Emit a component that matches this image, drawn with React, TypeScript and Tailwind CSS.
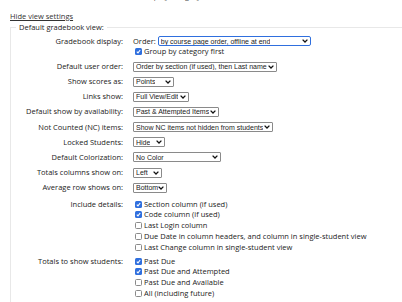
import React from "react";

const label = "font-['Open_Sans',sans-serif] text-[7.5px] leading-[11px] text-[#222]";
const sel = "font-['Liberation_Sans',Arial,sans-serif] text-[7px] text-[#222]";

function Chevron() {
  return (
    <svg width="6" height="4" viewBox="0 0 6 4" className="shrink-0">
      <path d="M0.6 0.6 L3 3 L5.4 0.6" fill="none" stroke="#111" strokeWidth="1.3" />
    </svg>
  );
}

function Select({ text, w, focus }: { text: string; w: string; focus?: boolean }) {
  return (
    <div
      className={`${w} ${sel} h-[10px] flex items-center justify-between bg-white pl-[2px] pr-[2px] ${
        focus ? "border-[1.5px] border-[#2f6fde] rounded-[2px]" : "border border-[#8a8a8a] rounded-[1px]"
      }`}
    >
      <span className="whitespace-nowrap overflow-hidden leading-none">{text}</span>
      <Chevron />
    </div>
  );
}

function Box({ on }: { on?: boolean }) {
  return on ? (
    <span className="w-[7px] h-[7px] rounded-[1.5px] bg-[#2f6fde] flex items-center justify-center shrink-0">
      <svg width="5" height="5" viewBox="0 0 5 5">
        <path d="M0.8 2.6 L2 3.8 L4.2 1" fill="none" stroke="white" strokeWidth="1.1" />
      </svg>
    </span>
  ) : (
    <span className="w-[7px] h-[7px] rounded-[1.5px] border border-[#8a8a8a] bg-white shrink-0" />
  );
}

function Check({ on, text }: { on?: boolean; text: string }) {
  return (
    <div className={`h-[10.8px] flex items-center gap-[2px] pl-[2px] ${label} whitespace-nowrap`}>
      <Box on={on} />
      <span>{text}</span>
    </div>
  );
}

function Row({ name, children, className = "h-[15.15px] items-center" }: { name: string; children: React.ReactNode; className?: string }) {
  return (
    <div className={`flex ${className}`}>
      <div className={`w-[112px] text-right ${label} whitespace-nowrap`}>{name}:</div>
      <div className="ml-[10px]">{children}</div>
    </div>
  );
}

const rows: [string, string, string][] = [
  ["Show scores as", "Points", "w-[41px]"],
  ["Links show", "Full View/Edit", "w-[56px]"],
  ["Default show by availability", "Past & Attempted Items", "w-[86px]"],
  ["Not Counted (NC) items", "Show NC items not hidden from students", "w-[140px]"],
  ["Locked Students", "Hide", "w-[32px]"],
  ["Default Colorization", "No Color", "w-[88px]"],
  ["Totals columns show on", "Left", "w-[29px]"],
  ["Average row shows on", "Bottom", "w-[34px]"],
];

export default function App() {
  return (
    <div className="w-[402px] h-[302px] bg-white overflow-hidden">
      <div className="h-[3px] overflow-hidden">
        <div className={`-mt-[9.5px] ml-[136px] ${label} text-[#555]`}>Group by category first</div>
      </div>
      <div className={`pl-[10px] pt-[8px] ${label}`}>
        <a className="text-[#333] underline">Hide view settings</a>
      </div>
      <fieldset className="ml-[10px] border-l border-t border-[#e8e8e8] pb-[10px] min-w-0">
        <legend className={`${label} ml-[5px] px-[3px]`}>Default gradebook view:</legend>
        <div className="mt-[2px]">
          <Row name="Gradebook display" className="items-start pt-[1px] h-[24px]">
            <div className="flex flex-col">
              <div className="h-[10.5px] flex items-center gap-[2px]">
                <span className={label}>Order:</span>
                <Select text="by course page order, offline at end" w="w-[153px]" focus />
              </div>
              <Check on text="Group by category first" />
            </div>
          </Row>
          <Row name="Default user order">
            <Select text="Order by section (if used), then Last name" w="w-[144px]" />
          </Row>
          {rows.map(([n, t, w]) => (
            <Row key={n} name={n}>
              <Select text={t} w={w} />
            </Row>
          ))}
          <Row name="Include details" className="items-start pt-[4px]">
            <div className="flex flex-col -mt-[0.5px]">
              <Check on text="Section column (if used)" />
              <Check on text="Code column (if used)" />
              <Check text="Last Login column" />
              <Check text="Due Date in column headers, and column in single-student view" />
              <Check text="Last Change column in single-student view" />
            </div>
          </Row>
          <Row name="Totals to show students" className="items-start pt-[3px]">
            <div className="flex flex-col">
              <Check on text="Past Due" />
              <Check on text="Past Due and Attempted" />
              <Check text="Past Due and Available" />
              <Check text="All (including future)" />
            </div>
          </Row>
        </div>
      </fieldset>
    </div>
  );
}
